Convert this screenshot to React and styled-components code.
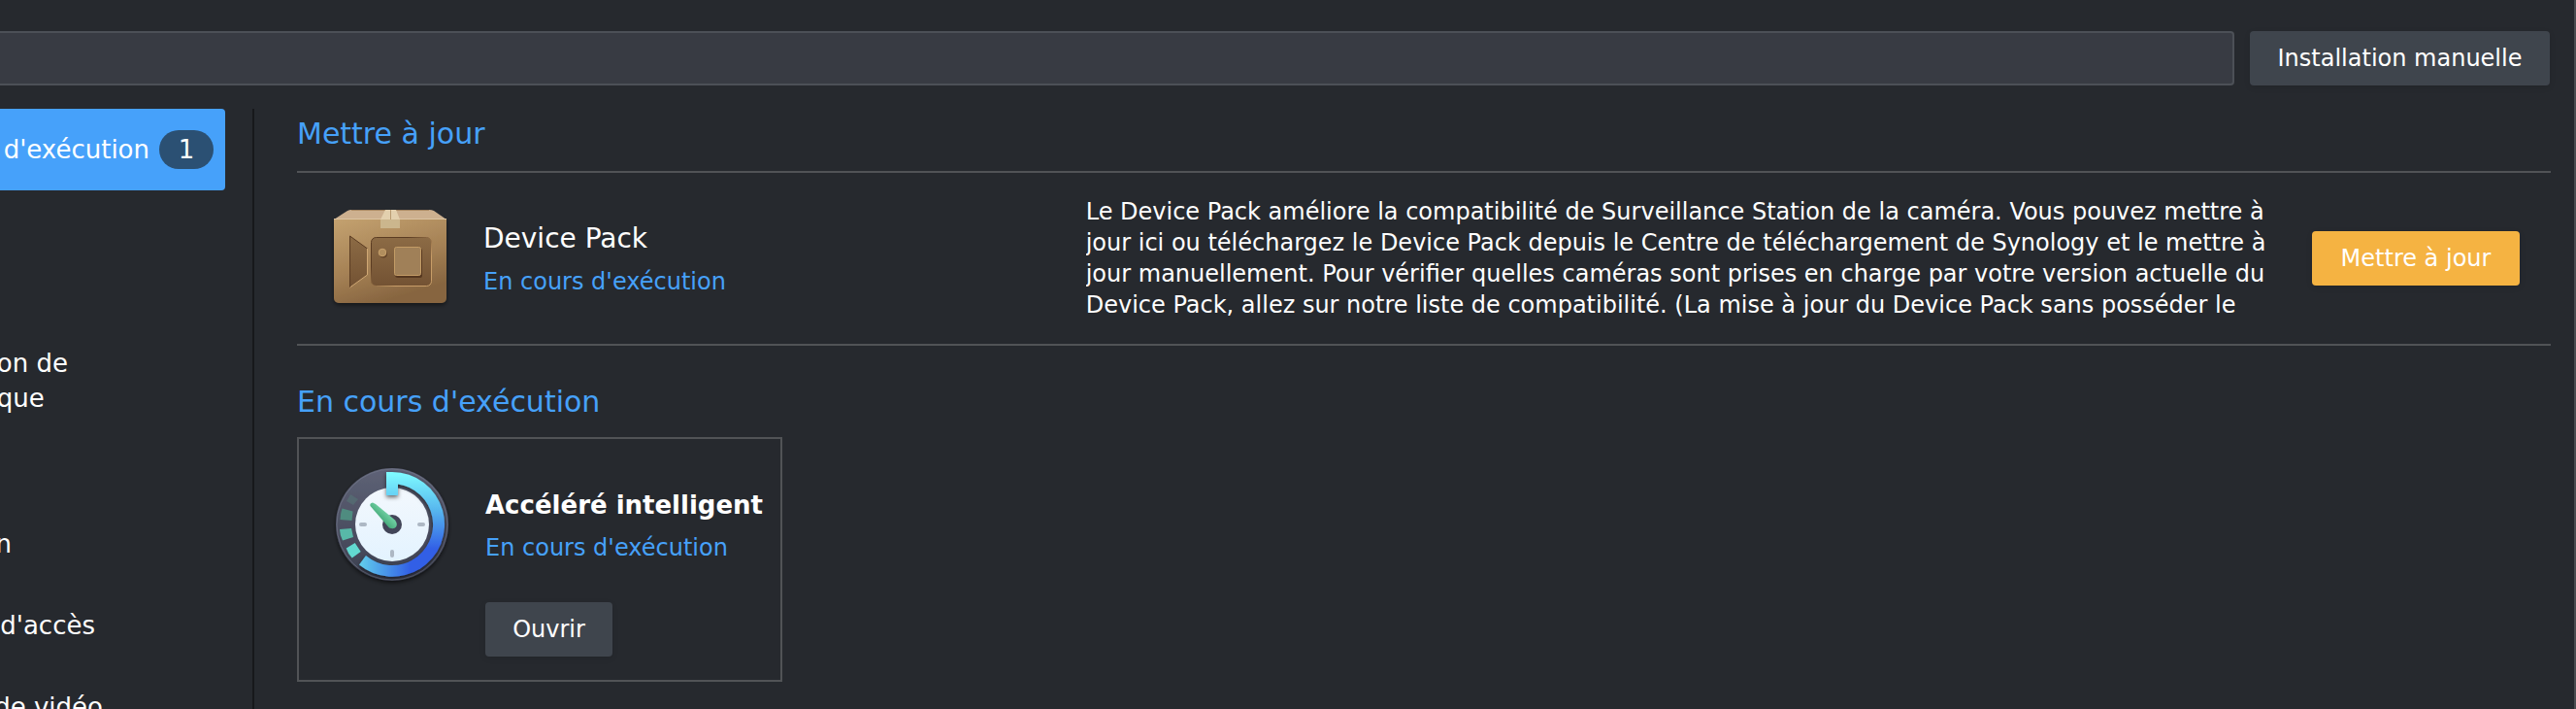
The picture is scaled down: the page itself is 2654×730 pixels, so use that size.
import { createGlobalStyle, styled } from "styled-components";

const GlobalStyle = createGlobalStyle`
  :root {
    --primary-color: #46a1fa;
    --line-color: #515356;
  }
  * {
    box-sizing: border-box;
  }
  body {
    margin: 0;
    background: #26292e;
    color: white;
    font-family: "DejaVu Sans", Verdana, sans-serif;
    font-size: 24px;
  }
`;

const Window = styled.div`
  display: flex;
  flex-direction: column;
  gap: 24px;
  height: 100vh;
  padding-top: 32px;
  overflow: hidden;
  border-right: 2px solid #4a4c50;
`;
const Toolbar = styled.header`
  display: flex;
  gap: 16px;
  padding-right: 25px;
`;
const SearchInput = styled.input`
  flex: 1;
  min-width: 0;
  height: 56px;
  padding: 0 16px;
  border: 2px solid #4c5057;
  border-left: none;
  border-radius: 0 4px 4px 0;
  background: #383b43;
  color: white;
  font: inherit;
  outline: none;
`;
const Button = styled.button`
  height: 56px;
  min-width: ${({ $minWidth }) => $minWidth}px;
  padding: 0 24px;
  border: none;
  border-radius: 4px;
  background: ${({ $primary }) => ($primary ? "#f5b342" : "#3f454d")};
  box-shadow: 0 2px 6px rgba(0, 0, 0, 0.1);
  color: white;
  font: inherit;
  white-space: nowrap;
`;
const Body = styled.div`
  display: flex;
  flex: 1;
  min-height: 0;
`;
const Sidebar = styled.nav`
  flex: none;
  width: 262px;
  padding-right: 28px;
  overflow: hidden;
  border-right: 2px solid #17181b;
`;
const MenuItem = styled.a`
  display: flex;
  align-items: center;
  gap: 10px;
  height: 84px;
  margin-top: ${({ $section }) => ($section ? 154 : 0)}px;
  border-radius: 0 4px 4px 0;
  color: white;
  font-size: 26px;
  line-height: 36px;
  text-decoration: none;
  &.active {
    background: var(--primary-color);
  }
`;
// labels are anchored on their right edge, the start runs out of the panel
const MenuLabel = styled.span`
  display: flex;
  justify-content: flex-end;
  width: ${({ $width }) => $width}px;
  white-space: pre;
`;
const Badge = styled.span`
  width: 56px;
  border-radius: 20px;
  background: #2b5073;
  line-height: 40px;
  text-align: center;
`;
const Content = styled.main`
  flex: 1;
  min-width: 0;
  padding: 0 24px 0 44px;
`;
const SectionTitle = styled.h2`
  margin: 0;
  color: var(--primary-color);
  font-size: 30px;
  font-weight: normal;
  line-height: 52px;
`;
const UpdateRow = styled.section`
  display: grid;
  grid-template-columns: 35% 1fr auto;
  align-items: center;
  height: 180px;
  margin: 12px 0 32px;
  border: solid var(--line-color);
  border-width: 2px 0;
`;
const UpdateAction = styled.div`
  display: flex;
  padding: 0 32px;
`;
const PackageHeader = styled.div`
  display: flex;
  align-items: center;
  gap: 38px;
  padding-left: 38px;
`;
const PackageInfo = styled.div`
  display: flex;
  flex-direction: column;
  gap: 2px;
  padding-top: 4px;
`;
const PackageName = styled.h3`
  margin: 0;
  font-size: ${({ $bold }) => ($bold ? 26 : 28)}px;
  font-weight: ${({ $bold }) => ($bold ? "bold" : "normal")};
  line-height: 42px;
  white-space: nowrap;
`;
const Status = styled.div`
  color: var(--primary-color);
  line-height: 42px;
`;
const Description = styled.p`
  max-height: 128px;
  margin: 0;
  overflow: hidden;
  line-height: 32px;
`;
const Card = styled.section`
  width: 500px;
  margin-top: 10px;
  padding: 30px 0 24px;
  border: 2px solid var(--line-color);
`;
const CardActions = styled.div`
  display: flex;
  margin-top: 22px;
  padding-left: 192px;
`;
const Icon = styled.svg`
  flex: none;
  display: block;
  overflow: visible;
`;

const menuItems = [
  { label: "d'exécution", width: 154, count: 1 },
  { label: "on de\nque", width: 70, section: true },
  { label: "", width: 0 },
  { label: "n", width: 12 },
  { label: "d'accès", width: 98 },
  { label: "de vidéo", width: 106 },
];

const BoxIcon = () => (
  <Icon width="116" height="100" viewBox="0 0 116 100" aria-hidden="true">
    <defs>
      <linearGradient id="box" x1="0" y1="0" x2="0.4" y2="1">
        <stop offset="0" stopColor="#c4a270" />
        <stop offset="0.6" stopColor="#a58155" />
        <stop offset="1" stopColor="#876540" />
      </linearGradient>
      <linearGradient id="hole" x1="0" y1="0" x2="0" y2="1">
        <stop offset="0" stopColor="#8c6b45" />
        <stop offset="1" stopColor="#735233" />
      </linearGradient>
      <linearGradient id="rim" x1="0" y1="0" x2="1" y2="1">
        <stop offset="0.3" stopColor="#5b3c22" />
        <stop offset="0.7" stopColor="#c89d68" />
      </linearGradient>
      <filter id="boxShadow" x="-20%" y="-20%" width="140%" height="150%">
        <feDropShadow dx="0" dy="2" stdDeviation="2" floodOpacity="0.5" />
      </filter>
    </defs>
    <path
      d="M0 9h116v82a5 5 0 0 1-5 5H5a5 5 0 0 1-5-5z"
      fill="url(#box)"
      filter="url(#boxShadow)"
    />
    <path d="M18 0h80q3 0 5 1l13 9H0L14 1q2-1 4-1z" fill="#cdb08f" />
    <path d="M18 .5h80" stroke="#a98862" />
    <path d="M0 9.5h116" stroke="#dcc4a2" />
    <path d="M53 0h11l4 10v9H48v-9z" fill="#e3d0ae" />
    <path d="M48 10h20v9H48z" fill="#cbb68d" />
    <path d="M58.500 0v10" stroke="#b89a70" />
    <path d="M16.500 27l18 13v27l-18 13z" fill="url(#hole)" />
    <path d="M16.500 80V27l18 13" fill="none" stroke="#5b3c22" />
    <path d="M34.500 40v27l-18 13" fill="none" stroke="#d0a874" />
    <rect x="38.500" y="28.500" width="62" height="50" rx="5" fill="url(#hole)" stroke="url(#rim)" />
    <path d="M64 40h25q2 0 2 2v26q0 2-2 2H66q-3 0-3-3z" fill="#4d2f1a" opacity="0.8" />
    <rect x="62.500" y="38.500" width="27" height="29" rx="2" fill="#a08058" stroke="#c39c66" />
    <circle cx="51" cy="45.500" r="4" fill="#4d2f1a" opacity="0.6" />
    <circle cx="50" cy="44" r="3.800" fill="#b18e5e" stroke="#c9a26c" />
  </Icon>
);

const TimerIcon = () => (
  <Icon width="116" height="116" viewBox="0 0 116 116" aria-hidden="true">
    <defs>
      <linearGradient id="dial" x1="0" y1="0" x2="0" y2="1">
        <stop offset="0" stopColor="#5e6276" />
        <stop offset="1" stopColor="#3c3f50" />
      </linearGradient>
      <linearGradient id="face" x1="0" y1="0" x2="0" y2="1">
        <stop offset="0" stopColor="#f3f8fd" />
        <stop offset="1" stopColor="#e3f3ff" />
      </linearGradient>
      <linearGradient id="arcRight" x1="0" y1="0" x2="0" y2="1">
        <stop offset="0" stopColor="#7ffcff" />
        <stop offset="0.4" stopColor="#56b5ee" />
        <stop offset="0.8" stopColor="#315ee6" />
      </linearGradient>
      <linearGradient id="arcLeft" x1="0" y1="0" x2="1" y2="0">
        <stop offset="0" stopColor="#62cfec" />
        <stop offset="0.85" stopColor="#315ee6" />
      </linearGradient>
      <linearGradient id="hand" x1="0" y1="1" x2="1" y2="0">
        <stop offset="0.300" stopColor="#3ba06f" />
        <stop offset="0.700" stopColor="#7ddcb0" />
      </linearGradient>
      <filter id="timerShadow" x="-20%" y="-20%" width="140%" height="140%">
        <feDropShadow dx="0" dy="2" stdDeviation="2" floodOpacity="0.6" />
      </filter>
    </defs>
    <circle cx="58" cy="58" r="58" fill="url(#dial)" filter="url(#timerShadow)" />
    <circle cx="58" cy="58" r="57" fill="none" stroke="#777b8d" strokeOpacity="0.6" />
    <circle cx="58" cy="58" r="38" fill="url(#face)" />
    <g filter="url(#timerShadow)">
      <path
        d="M87 103.500A54 54 0 0 1 24 99.500L31 90A42 42 0 0 0 80 94z"
        fill="url(#arcLeft)"
      />
      <path
        d="M52 4h6A54 54 0 0 1 86 104.200L79 94.500A42 42 0 0 0 64 16.500V28H52z"
        fill="url(#arcRight)"
      />
    </g>
    <path d="M10.700 82.500l9-5.500 6 9-9 6.500q-4-4-6-10z" fill="#62d9d0" />
    <path d="M4 63l12-1 2 9-11 3.500q-3-6-3-11.500z" fill="#58b9a8" />
    <path d="M6.500 41.500l11 3-1 9.500-12-1q0-6 2-11.500z" fill="#4f8c80" />
    <path d="M15 27l8 5-5 6-7-4z" fill="#567a78" opacity="0.5" />
    <g fill="#adb8c4">
      <rect x="24" y="56" width="8" height="4" rx="2" />
      <rect x="84" y="56" width="8" height="4" rx="2" />
      <rect x="56" y="84" width="4" height="8" rx="2" />
    </g>
    <circle cx="58" cy="58" r="10" fill="#424558" />
    <path d="M35.500 39q-1-3 2.500-3.500l3 1.500 20 16.500q3 4 1 7t-7 1z" fill="url(#hand)" />
  </Icon>
);

const App = () => {
  return (
    <>
      <GlobalStyle />
      <Window>
        <Toolbar>
          <SearchInput type="text" aria-label="Rechercher" />
          <Button $minWidth={309}>Installation manuelle</Button>
        </Toolbar>
        <Body>
          <Sidebar>
            {menuItems.map(({ label, width, section, count }, id) => (
              <MenuItem key={id} href="#" $section={section} className={count ? "active" : ""}>
                <MenuLabel $width={width}>{label}</MenuLabel>
                {count && <Badge>{count}</Badge>}
              </MenuItem>
            ))}
          </Sidebar>
          <Content>
            <SectionTitle>Mettre à jour</SectionTitle>
            <UpdateRow>
              <PackageHeader>
                <BoxIcon />
                <PackageInfo>
                  <PackageName>Device Pack</PackageName>
                  <Status>En cours d'exécution</Status>
                </PackageInfo>
              </PackageHeader>
              <Description>
                Le Device Pack améliore la compatibilité de Surveillance Station de la caméra. Vous
                pouvez mettre à jour ici ou téléchargez le Device Pack depuis le Centre de
                téléchargement de Synology et le mettre à jour manuellement. Pour vérifier quelles
                caméras sont prises en charge par votre version actuelle du Device Pack, allez sur
                notre liste de compatibilité. (La mise à jour du Device Pack sans posséder le
              </Description>
              <UpdateAction>
                <Button $primary $minWidth={214}>
                  Mettre à jour
                </Button>
              </UpdateAction>
            </UpdateRow>
            <SectionTitle>En cours d'exécution</SectionTitle>
            <Card>
              <PackageHeader>
                <TimerIcon />
                <PackageInfo>
                  <PackageName $bold>Accéléré intelligent</PackageName>
                  <Status>En cours d'exécution</Status>
                </PackageInfo>
              </PackageHeader>
              <CardActions>
                <Button $minWidth={131}>Ouvrir</Button>
              </CardActions>
            </Card>
          </Content>
        </Body>
      </Window>
    </>
  );
};
export default App;
